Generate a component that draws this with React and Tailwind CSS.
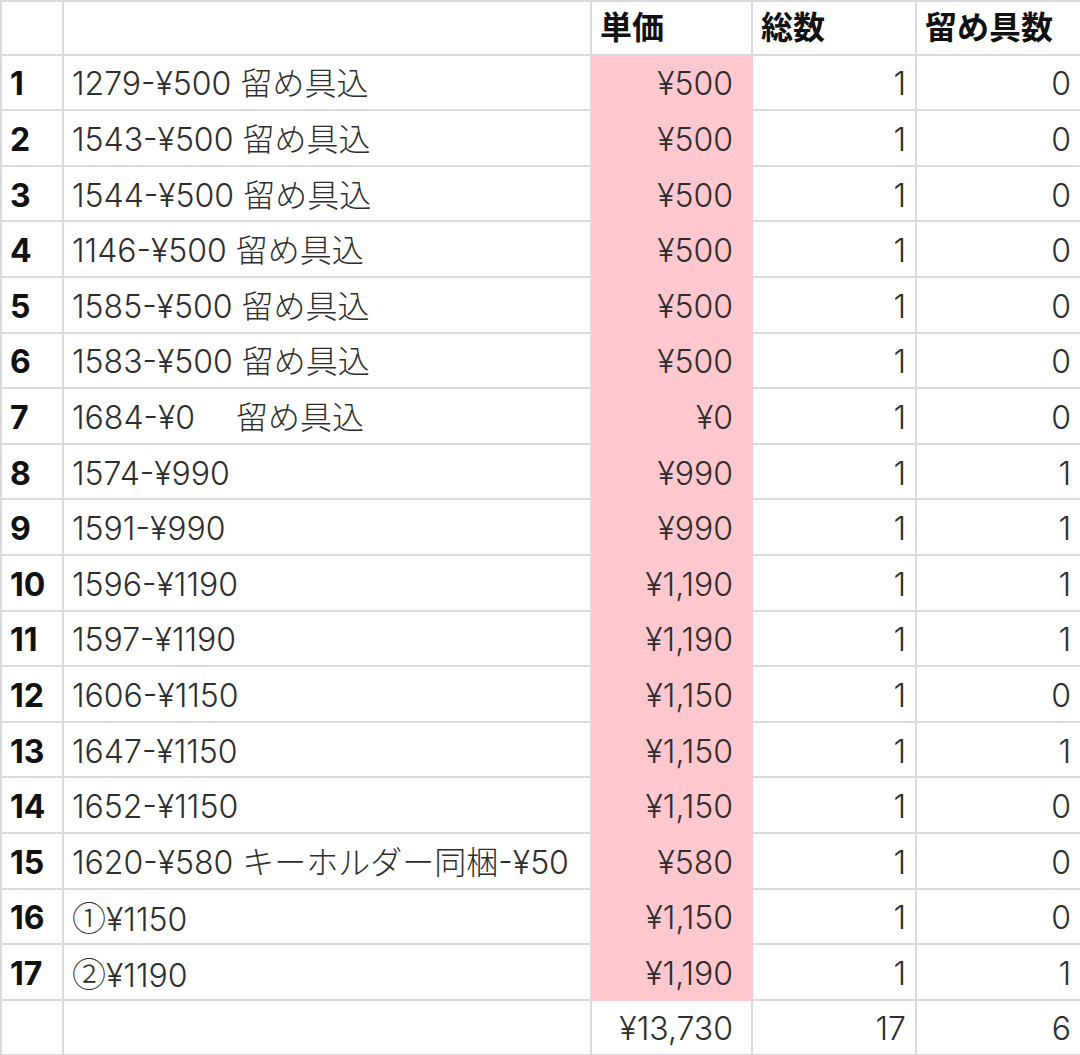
import React from "react";

const rows = [
  ["1279-¥500 留め具込", "¥500", 1, 0],
  ["1543-¥500 留め具込", "¥500", 1, 0],
  ["1544-¥500 留め具込", "¥500", 1, 0],
  ["1146-¥500 留め具込", "¥500", 1, 0],
  ["1585-¥500 留め具込", "¥500", 1, 0],
  ["1583-¥500 留め具込", "¥500", 1, 0],
  ["1684-¥0\u3000 留め具込", "¥0", 1, 0],
  ["1574-¥990", "¥990", 1, 1],
  ["1591-¥990", "¥990", 1, 1],
  ["1596-¥1190", "¥1,190", 1, 1],
  ["1597-¥1190", "¥1,190", 1, 1],
  ["1606-¥1150", "¥1,150", 1, 0],
  ["1647-¥1150", "¥1,150", 1, 1],
  ["1652-¥1150", "¥1,150", 1, 0],
  ["1620-¥580 キーホルダー同梱-¥50", "¥580", 1, 0],
  [<><span className="font-['Noto_Sans_CJK_JP'] text-[34px]">①</span>¥1150</>, "¥1,150", 1, 0],
  [<><span className="font-['Noto_Sans_CJK_JP'] text-[34px]">②</span>¥1190</>, "¥1,190", 1, 1],
];

// gridline cells, Excel-like
const cell = "border-r-2 border-b-2 border-[#dadada] h-[55.6px] p-0 whitespace-nowrap";
const pink = "border-r-2 border-b-2 border-[#ffc7ce] bg-[#ffc7ce] h-[55.6px] p-0 whitespace-nowrap text-right pr-[18px]";

const T = ({ children }) => <span className="inline-block translate-y-[2px]">{children}</span>;

const App = () => {
  return (
    <div className="w-[1080px] h-[1055px] bg-white overflow-hidden font-['Inter','Noto_Sans_CJK_JP',sans-serif] font-light text-[32px] leading-none text-[#2e2e2e]">
      <table className="border-separate border-spacing-0 table-fixed w-[1082px]">
        <colgroup>
          <col className="w-[64px]" />
          <col className="w-[528px]" />
          <col className="w-[161px]" />
          <col className="w-[164px]" />
          <col className="w-[165px]" />
        </colgroup>
        <thead>
          <tr className="font-bold text-[#111]">
            <th className={`${cell} border-t-2 border-l-2`}></th>
            <th className={`${cell} border-t-2`}></th>
            <th className={`${cell} border-t-2 text-left pl-2`}>単価</th>
            <th className={`${cell} border-t-2 text-left pl-2`}>総数</th>
            <th className={`${cell} border-t-2 text-left pl-2`}>留め具数</th>
          </tr>
        </thead>
        <tbody>
          {rows.map((r, i) => (
            <tr key={i}>
              <td className={`${cell} border-l-2 pl-2 font-bold text-[#111]`}><T>{i + 1}</T></td>
              <td className={`${cell} pl-2`}><T>{r[0]}</T></td>
              <td className={pink}><T>{r[1]}</T></td>
              <td className={`${cell} text-right pr-[9px]`}><T>{r[2]}</T></td>
              <td className={`${cell} text-right pr-[9px]`}><T>{r[3]}</T></td>
            </tr>
          ))}
          <tr>
            <td className={`${cell} border-l-2`}></td>
            <td className={cell}></td>
            <td className={`${cell} text-right pr-[18px]`}><T>¥13,730</T></td>
            <td className={`${cell} text-right pr-[9px]`}><T>17</T></td>
            <td className={`${cell} text-right pr-[9px]`}><T>6</T></td>
          </tr>
        </tbody>
      </table>
    </div>
  );
};

export default App;
